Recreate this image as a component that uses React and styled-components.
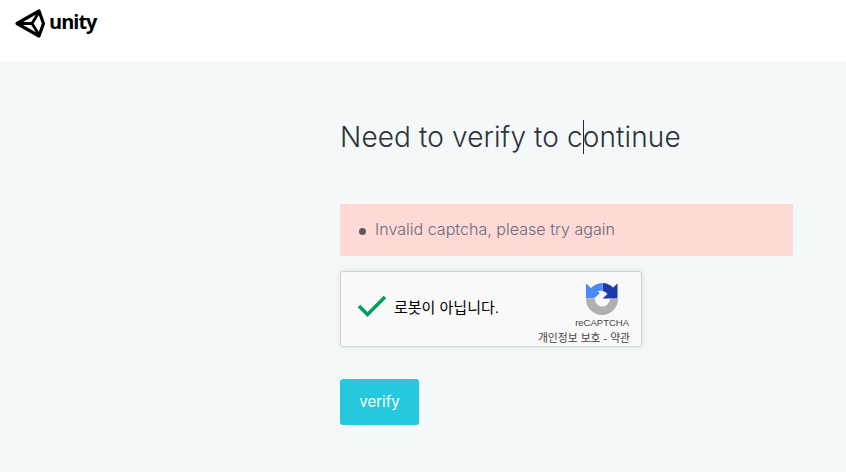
import React from "react"
import styled, { createGlobalStyle } from "styled-components"

const GlobalStyle = createGlobalStyle`
html, body {
  margin: 0;
  background: #f5f8f9;
  font-family: Inter, "Liberation Sans", sans-serif;
}
`

const Header = styled.header`
height: 61px;
background: #fff;
box-sizing: border-box;
padding: 8px 0 0 14px;
display: flex;
align-items: flex-start;
gap: 2px;
`

const LogoText = styled.span`
font-family: "Open Sans", sans-serif;
font-weight: 700;
font-size: 20px;
line-height: 28px;
letter-spacing: -1px;
color: #000;
`

const Main = styled.main`
height: 411px;
box-sizing: border-box;
padding: 58px 0 0 340px;
`

const Content = styled.div`
width: 453px;
`

const Heading = styled.h1`
position: relative;
margin: 0 0 49px;
font-size: 28px;
line-height: 36px;
font-weight: 300;
letter-spacing: 0.12px;
color: #2b3338;
`

const Caret = styled.span`
position: absolute;
left: 243px;
top: 1px;
width: 1px;
height: 34px;
background: #222c31;
`

const Alert = styled.div`
margin: 0 0 15px;
padding: 0 0 0 19px;
height: 52px;
display: flex;
align-items: center;
gap: 9px;
background: #ffd9d6;
`

const Bullet = styled.span`
width: 7px;
height: 7px;
margin-top: 3px;
border-radius: 50%;
background: #5a5a5a;
`

const AlertText = styled.span`
font-size: 16px;
font-weight: 300;
letter-spacing: 0.03px;
margin-bottom: 2px;
color: #666c78;
`

const Captcha = styled.div`
width: 302px;
height: 76px;
box-sizing: border-box;
display: flex;
justify-content: space-between;
background: #f9f9f9;
border: 1px solid #d3d3d3;
border-radius: 3px;
box-shadow: 0 0 4px 1px rgba(0, 0, 0, 0.08);
padding: 0 11px 0 16px;
`

const CheckRow = styled.div`
display: flex;
align-items: center;
gap: 7px;
height: 68px;
`

const CheckLabel = styled.span`
font-family: "Liberation Sans", "Noto Sans CJK KR", sans-serif;
font-size: 15px;
color: #000;
`

const Brand = styled.div`
display: flex;
flex-direction: column;
align-items: flex-end;
padding-top: 11px;
`

const BrandMark = styled.div`
display: flex;
margin-right: 12px;
`

const BrandName = styled.div`
font-family: "Liberation Sans", sans-serif;
font-size: 9.5px;
line-height: 12px;
color: #444;
margin-top: 2px;
margin-right: 1px;
`

const BrandLinks = styled.div`
font-family: "Liberation Sans", "Noto Sans CJK KR", sans-serif;
font-size: 10.8px;
line-height: 14px;
margin-top: 2px;
color: #444;
white-space: nowrap;
`

const VerifyButton = styled.button`
display: block;
margin-top: 32px;
padding: 0 0 2px;
width: 79px;
height: 46px;
border: 0;
border-radius: 3px;
background: #25c8dc;
color: #fff;
font-family: Inter, sans-serif;
font-size: 15px;
font-weight: 400;
`

const UnityMark = () => (
  <svg width="33" height="32" viewBox="0 0 33 32">
    <path d="M3 15.5 L25 3 L29.5 15.5 L25 28 Z" fill="none" stroke="#000" strokeWidth="3.2" strokeLinejoin="round" />
    <path d="M4 15.5 H18 L24.5 5 M18 15.5 L24.5 26" fill="none" stroke="#000" strokeWidth="2.8" />
  </svg>
)

const CheckMark = () => (
  <svg width="30" height="22" viewBox="0 0 30 22">
    <path d="M2 11 L10.5 19.5 L28 2" fill="none" stroke="#029e5d" strokeWidth="3.6" />
  </svg>
)

const RecaptchaLogo = () => (
  <svg width="32" height="32" viewBox="0 0 32 32">
    <path d="M16 0 A16 16 0 0 0 5 5 L0 0.5 V15.5 H8 L14 10 L11.5 8.5 A8 8 0 0 1 16 8 Z" fill="#4a8af4" />
    <path d="M16.5 0 A16 16 0 0 1 27 4.5 L31.5 0.5 V15.5 H16.5 L21.5 11 A8 8 0 0 0 16.5 8 Z" fill="#1c3aa9" />
    <path d="M0 16 H9 A7.5 7.5 0 0 0 21 22 L24 17.5 V16 H32 A16 16 0 0 1 0 16 Z" fill="#b0b0b0" />
  </svg>
)

export default function App() {
  return (
    <>
      <GlobalStyle />
      <Header>
        <UnityMark />
        <LogoText>unity</LogoText>
      </Header>
      <Main>
        <Content>
          <Heading>
            Need to verify to continue
            <Caret />
          </Heading>
          <Alert>
            <Bullet />
            <AlertText>Invalid captcha, please try again</AlertText>
          </Alert>
          <Captcha>
            <CheckRow>
              <CheckMark />
              <CheckLabel>로봇이 아닙니다.</CheckLabel>
            </CheckRow>
            <Brand>
              <BrandMark>
                <RecaptchaLogo />
              </BrandMark>
              <BrandName>reCAPTCHA</BrandName>
              <BrandLinks>개인정보 보호 - 약관</BrandLinks>
            </Brand>
          </Captcha>
          <VerifyButton>verify</VerifyButton>
        </Content>
      </Main>
    </>
  )
}
